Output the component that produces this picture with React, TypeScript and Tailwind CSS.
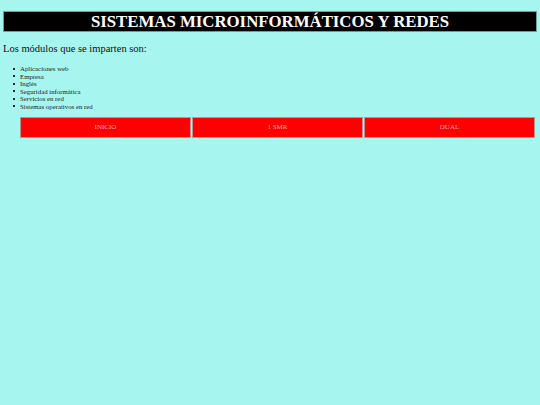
const modulos = [
  "Aplicaciones web",
  "Empresa",
  "Inglés",
  "Seguridad informática",
  "Servicios en red",
  "Sistemas operativos en red",
];

const enlaces = ["INICIO", "1 SMR", "DUAL"];

export default function App() {
  return (
    <div className="min-h-screen bg-[#a6f6ef] pt-[11px] font-['Liberation_Serif',serif] text-black">
      <h1 className="mx-[3px] h-[21px] border border-[#6b9c98] bg-black text-center text-[16.8px] font-bold leading-[19px] text-white">
        SISTEMAS MICROINFORMÁTICOS Y REDES
      </h1>
      <p className="ml-[3px] mt-[10px] text-[10.5px] leading-[13px] text-[#111]">Los módulos que se imparten son:</p>
      <ul className="ml-[13px] mt-[10px] text-[6.8px] leading-[7.5px] text-[#222]">
        {modulos.map((m) => (
          <li key={m} className="flex items-center">
            <span className="mr-[5px] h-[2px] w-[2px] bg-[#222]" />
            {m}
          </li>
        ))}
      </ul>
      <div className="ml-[20px] mr-[5px] mt-[7px] flex gap-px">
        {enlaces.map((e) => (
          <div
            key={e}
            className="flex h-[21px] flex-1 items-center justify-center border border-[#c09090] bg-[#ff0000] text-[7px] text-[#ffb0b8]"
          >
            {e}
          </div>
        ))}
      </div>
    </div>
  );
}
